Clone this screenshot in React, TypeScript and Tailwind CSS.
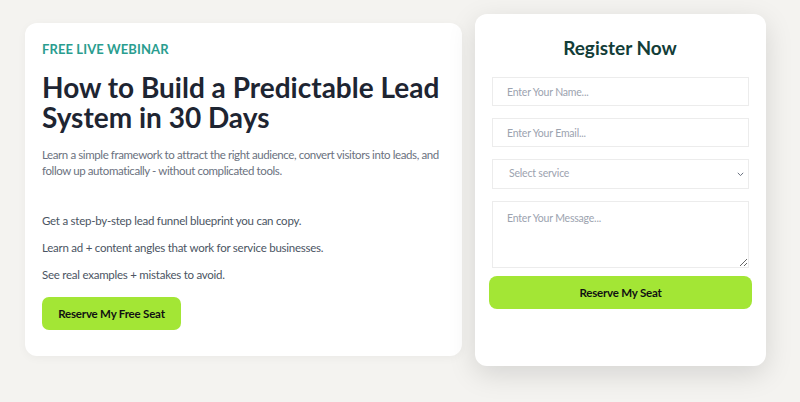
import React from "react";

export default function App() {
  const font = { fontFamily: 'Lato, "Noto Sans", sans-serif' };
  return (
    <div
      className="w-[800px] h-[402px] bg-[#f4f3f0] flex items-start pt-[14px] pl-[25px] gap-[13px] overflow-hidden"
      style={font}
    >
      <div className="mt-[9px] w-[437px] h-[333px] bg-white rounded-[12px] shadow-[0_2px_10px_rgba(0,0,0,0.04)] px-[17px] pt-[18px] flex flex-col">
        <div className="text-[13px] font-bold text-[#2a9d8f] leading-[16px] tracking-[0.1px]">FREE LIVE WEBINAR</div>
        <h1 className="mt-[15px] text-[28px] font-bold text-[#1e2532] leading-[30px]">
          How to Build a Predictable Lead System in 30 Days
        </h1>
        <p className="mt-[15px] text-[11.5px] tracking-[-0.4px] text-[#6b7280] leading-[16px]">
          Learn a simple framework to attract the right audience, convert visitors into leads, and follow up automatically - without complicated tools.
        </p>
        <div className="mt-[33px] flex flex-col gap-[10px] text-[11.5px] tracking-[-0.25px] text-[#4b5563] leading-[17px]">
          <div>Get a step-by-step lead funnel blueprint you can copy.</div>
          <div>Learn ad + content angles that work for service businesses.</div>
          <div>See real examples + mistakes to avoid.</div>
        </div>
        <button className="mt-[14px] w-[139px] h-[33px] rounded-[7px] bg-[#a3e635] text-[11.5px] tracking-[-0.2px] font-bold text-[#111]">
          Reserve My Free Seat
        </button>
      </div>

      <div className="w-[291px] h-[352px] bg-white rounded-[12px] shadow-[0_8px_28px_rgba(0,0,0,0.13)] px-[17px] pt-[22px] flex flex-col">
        <h2 className="text-center text-[19px] font-bold text-[#133d38] leading-[24px] mr-[1px]">Register Now</h2>
        <div className="mt-[17px] flex flex-col gap-[12px]">
          <input
            className="h-[29px] w-full border border-[#ececec] px-[14px] text-[10.5px] tracking-[-0.2px] text-[#374151] placeholder:text-[#9ca3af] outline-none"
            placeholder="Enter Your Name..."
            style={font}
          />
          <input
            className="h-[29px] w-full border border-[#ececec] px-[14px] text-[10.5px] tracking-[-0.2px] text-[#374151] placeholder:text-[#9ca3af] outline-none"
            placeholder="Enter Your Email..."
            style={font}
          />
          <div className="relative h-[30px] w-full border border-[#ececec] flex items-center px-[16px] text-[10.5px] tracking-[-0.2px] text-[#9ca3af]">
            Select service
            <svg className="absolute right-[4px] top-[12px]" width="7" height="5" viewBox="0 0 7 5" fill="none">
              <path d="M0.8 0.8 L3.5 3.6 L6.2 0.8" stroke="#6b7280" strokeWidth="1" />
            </svg>
          </div>
          <textarea
            className="h-[67px] w-full border border-[#ececec] px-[14px] py-[9px] text-[10.5px] tracking-[-0.2px] text-[#374151] placeholder:text-[#9ca3af] outline-none resize-y"
            placeholder="Enter Your Message..."
            style={font}
          />
        </div>
        <button className="mt-[8px] -mx-[3px] h-[33px] rounded-[8px] bg-[#a3e635] text-[11.5px] tracking-[-0.2px] font-bold text-[#111]">
          Reserve My Seat
        </button>
      </div>
    </div>
  );
}
